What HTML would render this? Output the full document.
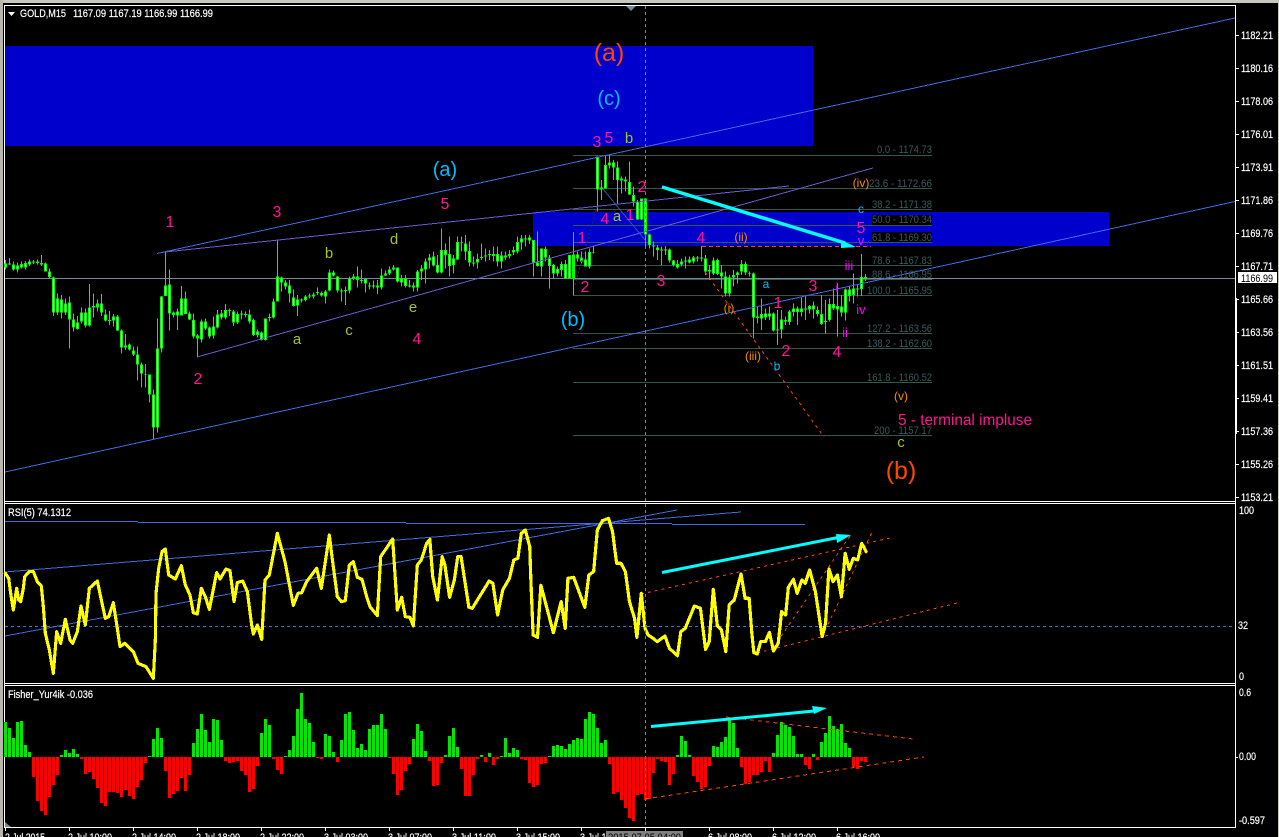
<!DOCTYPE html>
<html><head><meta charset="utf-8"><title>GOLD,M15</title>
<style>
html,body{margin:0;padding:0;background:#000;width:1279px;height:837px;overflow:hidden}
svg{display:block;position:absolute;left:0;top:0}
text{font-family:"Liberation Sans",sans-serif}
.m{text-anchor:middle}
.ax{font-size:11px;fill:#fff;stroke:#fff;stroke-width:.2px}
.fb{font-size:11px;fill:#3a5a5a}
.pk{font-size:16px;fill:#FF1493;text-anchor:middle}
.yg{font-size:15px;fill:#A4C41F;text-anchor:middle}
.sk{font-size:12px;fill:#00BFFF;text-anchor:middle}
.og{font-size:12px;fill:#FF8C00;text-anchor:middle}
.mg{font-size:13px;fill:#FF00FF;text-anchor:middle}
.c{shape-rendering:crispEdges;fill:none}
</style></head><body>
<svg width="1279" height="837" viewBox="0 0 1279 837" xmlns="http://www.w3.org/2000/svg">
<rect width="1279" height="837" fill="#000"/>
<rect x="0" y="0" width="1279" height="3" fill="#c9c6bd"/>
<rect x="0" y="0" width="3" height="837" fill="#b8b5ac"/>
<rect x="1278" y="0" width="1" height="837" fill="#c9c6bd"/>
<g shape-rendering="crispEdges" fill="#fff">
<rect x="4" y="5" width="1232" height="1"/>
<rect x="4" y="5" width="1" height="823"/>
<rect x="1235" y="5" width="1" height="823"/>
<rect x="4" y="501" width="1232" height="1"/>
<rect x="4" y="503" width="1232" height="1"/>
<rect x="4" y="683" width="1232" height="1"/>
<rect x="4" y="685" width="1232" height="1"/>
<rect x="4" y="827" width="1232" height="1"/>
<rect x="1235" y="298" width="2" height="136"/>
</g>
<!-- blue zones -->
<g shape-rendering="crispEdges" fill="#0000CD">
<rect x="5" y="46" width="808" height="100"/>
<rect x="533" y="212" width="576" height="34"/>
</g>
<!-- fib lines -->
<path class="c" stroke="#35554f" d="M573 155.5H932M573 188.5H932M573 209.5H932M573 225.5H932M573 242.5H932M573 265.5H932M573 279.5H932M573 295.5H932M573 333.5H932M573 348.5H932M573 382.5H932M573 435.5H932"/>
<!-- price line -->
<path class="c" stroke="#778899" d="M5 278.5H1235"/>
<!-- candles left -->
<g class="c" transform="translate(0 230) scale(.33333)">
<path stroke="#00FF00" stroke-width="3" d="M16 90V118M28 84V105M40 95V122M52 97V128M64 95V115M76 93V118M88 88V108M100 90V102M112 88V104M124 75V108M136 97V125M148 115V145M160 140V258M172 190V255M184 195V265M196 205V255M208 200V356M220 250V305M232 258V298M244 232V280M256 235V292M268 162V290M280 190V263M292 208V245M304 192V258M316 238V275M328 243V285M340 252V290M352 255V303M364 298V370M376 312V360M388 340V362M400 350V378M412 350V452M424 398V472M436 402V472M448 433V518M460 478V628M472 265V608M484 198V368M496 65V198M508 118V302M520 245V262M532 235V300M544 168V255M556 185V252M568 245V270M580 250V325M592 312V382M604 268V338M616 265V300M628 290V325M640 260V325M652 240V295M664 240V268M676 222V268M688 235V258M700 240V288M712 245V282M724 242V268M736 245V262M748 238V280M760 265V318M772 298V322M784 305V332M796 265V332M808 250V275M820 205V265M832 28V215M844 140V185M856 150V178M868 150V218M880 178V230M892 195V258M904 205V218M916 195V215M928 190V205M940 188V205M952 172V195M964 185V200M976 180V220M988 118V185M1000 122V140M1012 138V188M1024 175V215M1036 170V225M1048 140V190M1060 132V150M1072 110V172M1084 118V160M1096 145V188M1108 158V178M1120 152V175M1132 150V192M1144 115V178M1156 122V138M1168 110V135M1180 105V122M1192 112V158M1204 135V170M1216 135V172M1228 150V172M1240 158V185M1252 120V185M1264 105V150M1276 85V160M1288 72V115"/>
<path stroke="#00FF00" stroke-width="9" d="M16 100V113M28 100V103M40 103V118M52 106V118M64 102V112M76 99V112M88 94V103M100 94V98M112 94V99M124 99V104M136 100V124M148 124V141M160 142V248M172 205V248M184 208V248M196 220V248M208 217V268M220 268V292M232 277V297M244 247V275M256 247V287M268 232V287M280 228V232M292 220V232M304 220V248M316 253V271M328 270V273M340 260V271M352 259V301M364 301V352M376 346V353M388 344V358M400 361V373M412 374V403M424 403V430M436 432V434M448 434V493M460 493V592M472 355V592M484 199V355M496 166V198M508 163V250M520 247V255M532 245V256M544 205V256M556 205V252M568 250V268M580 270V320M592 316V325M604 275V328M616 275V296M628 292V320M640 290V316M652 253V292M664 250V262M676 240V262M688 240V243M700 245V278M712 252V278M724 251V254M736 252V255M748 253V275M760 270V315M772 304V315M784 308V330M796 265V330M808 261V264M820 214V263M832 140V214M844 143V157M856 157V170M868 167V190M880 203V228M892 208V226M904 208V212M916 199V210M928 197V200M940 193V199M952 186V189M964 189V197M976 184V199M988 127V182M1000 127V136M1012 140V182M1024 182V185M1036 180V183M1048 145V182M1060 139V145M1072 140V150M1084 150V153M1096 147V160M1108 167V170M1120 167V170M1132 167V172M1144 136V172M1156 130V136M1168 118V130M1180 112V118M1192 112V155M1204 146V158M1216 146V168M1228 166V170M1240 166V172M1252 124V172M1264 115V124M1276 94V118M1288 82V92"/>
<path stroke="#fff" stroke-width="3" d="M16 103V110M40 106V115M52 109V115M64 105V109M76 102V109M88 97V100M136 103V121M148 127V138M160 145V245M172 208V245M184 211V245M196 223V245M208 220V265M220 271V289M232 280V294M244 250V272M256 250V284M268 235V284M304 223V245M316 256V268M340 263V268M352 262V298M364 304V349M388 347V355M400 364V370M412 377V400M424 406V427M448 437V490M460 496V589M472 358V589M484 202V352M496 169V195M508 166V247M532 248V253M544 208V253M556 208V249M568 253V265M580 273V317M604 278V325M616 278V293M628 295V317M640 293V313M652 256V289M664 253V259M676 243V259M700 248V275M712 255V275M748 256V272M760 273V312M772 307V312M784 311V327M796 268V327M820 217V260M832 143V211M844 146V154M856 160V167M868 170V187M880 206V225M892 211V223M916 202V207M964 192V194M976 187V196M988 130V179M1000 130V133M1012 143V179M1048 148V179M1096 150V157M1144 139V169M1168 121V127M1192 115V152M1204 149V155M1216 149V165M1252 127V169M1264 118V121M1276 97V115M1288 85V89"/>
</g>
<!-- candles right -->
<g class="c" transform="translate(430 120) scale(.33333)">
<path stroke="#00FF00" stroke-width="3" d="M10 395V440M22 405V460M34 325V460M46 370V445M58 350V470M70 405V460M82 350V420M94 350V395M106 345V420M118 365V440M130 410V440M142 400V445M154 370V420M166 385V425M178 390V420M190 380V425M202 380V440M214 395V445M226 395V420M238 390V415M250 380V405M262 350V400M274 345V390M286 345V380M298 345V372M310 360V470M322 335V440M334 385V470M346 380V425M358 405V505M370 432V475M382 440V470M394 425V470M406 420V475M418 405V475M430 336V527M442 395V425M454 395V430M466 395V440M478 385V445M490 380V400M502 110V275M514 180V240M526 105V205M538 105V145M550 120V180M562 125V250M574 170V220M586 170V215M598 125V225M610 200V260M622 240V300M634 235V300M646 235V385M658 340V385M670 365V410M682 375V420M694 380V435M706 378V405M718 385V428M730 420V440M742 420V445M754 415V440M766 410V445M778 410V430M790 408V430M802 408V425M814 378V425M826 405V465M838 435V480M850 412V465M862 415V465M874 435V505M886 455V530M898 465V530M910 450V500M922 455V490M934 420V465M946 425V465M958 455V470M970 458V655M982 560V610M994 535V630M1006 565V600M1018 560V600M1030 578V635M1042 570V675M1054 570V655M1066 590V615M1078 570V615M1090 550V590M1102 560V615M1114 530V590M1126 530V600M1138 555V580M1150 545V595M1162 560V590M1174 525V615M1186 540V640M1198 535V605M1210 505V570M1222 490V650M1234 525V590M1246 505V602M1258 500V545M1270 460V550M1282 495V530M1294 402V528M1306 462V483"/>
<path stroke="#00FF00" stroke-width="9" d="M10 410V437M22 435V458M34 390V458M46 390V405M58 402V438M70 415V435M82 366V418M94 366V368M106 370V395M118 393V428M130 428V431M142 417V428M154 411V414M166 406V409M178 402V405M190 402V408M202 402V425M214 406V425M226 406V412M238 402V408M250 390V397M262 366V395M274 355V368M286 355V358M298 352V362M310 360V428M322 428V438M334 385V440M346 387V412M358 412V438M370 435V460M382 447V460M394 432V450M406 432V475M418 405V475M430 403V475M442 403V416M454 412V424M466 418V440M478 396V440M490 396V398M502 110V208M514 202V208M526 135V205M538 127V137M550 127V142M562 142V180M574 176V182M586 178V184M598 186V224M610 225V244M622 244V298M634 236V298M646 235V344M658 344V375M670 376V380M682 382V390M694 388V391M706 388V391M718 388V422M730 422V435M742 432V442M754 425V433M766 422V425M778 418V427M790 412V425M802 412V415M814 412V415M826 415V455M838 450V455M850 422V460M862 420V462M874 458V470M886 470V520M898 472V520M910 465V472M922 458V465M934 432V455M946 432V458M958 460V462M970 460V592M982 590V594M994 582V596M1006 580V592M1018 580V590M1030 580V632M1042 628V632M1054 598V628M1066 600V604M1078 574V606M1090 565V576M1102 566V576M1114 565V576M1126 565V568M1138 558V568M1150 556V568M1162 570V582M1174 582V612M1186 603V606M1198 552V600M1210 552V566M1222 558V568M1234 560V578M1246 508V578M1258 508V528M1270 505V525M1282 505V508M1294 471V507M1306 471V477"/>
<path stroke="#fff" stroke-width="3" d="M10 413V434M22 438V455M34 393V455M46 393V402M58 405V435M70 418V432M82 369V415M106 373V392M118 396V425M142 420V425M202 405V422M214 409V422M250 393V394M262 369V392M274 358V365M298 355V359M310 363V425M322 431V435M334 388V437M346 390V409M358 415V435M370 438V457M382 450V457M394 435V447M406 435V472M418 408V472M442 406V413M454 415V421M466 421V437M478 399V437M502 113V205M526 138V202M538 130V134M550 130V139M562 145V177M598 189V221M610 228V241M622 247V295M634 239V295M646 238V341M658 347V372M682 385V387M718 391V419M730 425V432M742 435V439M754 428V430M778 421V424M790 415V422M826 418V452M850 425V457M862 423V459M874 461V467M886 473V517M898 475V517M922 461V462M934 435V452M946 435V455M970 463V589M994 585V593M1006 583V589M1018 583V587M1030 583V629M1054 601V625M1078 577V603M1090 568V573M1102 569V573M1114 568V573M1138 561V565M1150 559V565M1162 573V579M1174 585V609M1198 555V597M1210 555V563M1222 561V565M1234 563V575M1246 511V575M1258 511V525M1270 508V522M1294 474V504"/>
</g>
<!-- trend lines main -->
<g class="c">
<path stroke="#4169E1" d="M5 472L1235 201.5M157 253.5L1235 18"/>
<path stroke="#6A5ACD" d="M165 252L789 186M197 357L873 168"/>
<path stroke="#3a4fa0" d="M603 189L645 240"/>
<path stroke="#1c2a70" stroke-dasharray="2 2" d="M575 285L597 207"/>
<path stroke="#FF4500" stroke-dasharray="4 3" d="M702 246.5H871"/>
<path stroke="#FF4500" stroke-dasharray="3 4" d="M705 272L824 437"/>
</g>
<!-- arrows -->
<path d="M662 187L845 243" stroke="#00FFFF" stroke-width="3.5" fill="none"/>
<polygon points="841,240 856,247 841,248" fill="#00FFFF"/>
<!-- RSI -->
<g class="c">
<path stroke="#4169E1" d="M5 521.5H138M138 522.5H406M406 523.5H672M672 524.5H805M5 572L741 512M5 636L677 510"/>
<path stroke="#3a6ff0" stroke-dasharray="3 3" d="M5 626.5H1235"/>
<path stroke="#FF4500" stroke-dasharray="3 4" d="M641 594L890 538M757 653L957 603M773 648L852 533M822 637L873 530"/>
</g>
<g fill="none" stroke="#FFFF00" stroke-linejoin="round" stroke-linecap="round" shape-rendering="crispEdges">
<polyline transform="translate(0 500) scale(.33333)" stroke-width="9.5" points="16,220 26,235 32,280 40,330 50,265 56,300 62,305 70,265 74,230 88,215 100,215 112,245 124,258 130,320 136,400 148,450 160,520 170,395 182,430 196,358 210,420 218,430 232,395 243,318 256,375 268,265 292,243 304,300 316,355 326,350 340,308 352,385 360,440 374,430 400,455 414,490 438,500 460,535 466,420 468,280 476,205 486,155 496,147 506,225 526,237 544,197 556,255 570,285 580,338 592,342 604,265 616,290 628,328 650,218 660,237 678,207 690,212 702,305 712,248 728,243 742,275 755,375 760,402 772,375 785,418 795,240 808,225 832,100 855,185 880,316 894,280 905,278 920,245 950,205 964,265 988,105 996,170 1012,290 1024,305 1036,302 1048,195 1060,185 1072,232 1086,238 1100,290 1110,320 1132,347 1142,170 1178,117 1192,330 1205,292 1216,350 1230,352 1240,378 1252,195 1264,180 1280,130 1290,118"/>
<polyline transform="translate(430 500) scale(.33807 .33333)" stroke-width="9.5" points="0,125 8,230 22,300 36,170 44,195 58,292 72,240 82,170 92,170 115,322 125,325 175,243 186,250 200,345 215,270 235,235 248,180 260,175 270,100 282,90 295,140 298,230 305,405 318,412 328,256 365,398 388,305 400,385 408,235 425,232 458,322 470,225 484,215 495,90 510,62 528,55 540,95 552,190 565,190 578,215 590,305 605,355 612,412 625,280 636,385 645,405 660,415 672,425 695,408 708,445 732,467 742,395 755,385 782,318 800,325 815,448 826,425 838,268 850,378 862,390 875,455 885,315 900,300 920,222 932,295 944,295 952,400 958,458 968,462 978,425 992,425 1004,397 1016,453 1030,430 1040,335 1052,345 1060,262 1075,238 1086,280 1100,240 1110,250 1123,210 1140,275 1160,410 1170,370 1180,207 1192,245 1205,225 1217,290 1228,160 1240,208 1252,175 1265,180 1277,130 1290,155"/>
</g>
<path d="M662 572.5L838 537.5" stroke="#00FFFF" stroke-width="3" fill="none"/>
<polygon points="836,534 851,535 837,543" fill="#00FFFF"/>
<!-- Fisher left -->
<g class="c" stroke-width="9" transform="translate(0 680) scale(.33333)">
<path stroke="#00E800" d="M16 231V126M28 231V144M40 231V174M52 231V126M64 231V123M76 231V195M88 231V216M184 231V225M196 231V210M208 231V219M220 231V207M232 231V222M448 231V228M460 231V177M472 231V144M484 231V174M580 231V189M592 231V147M604 231V102M616 231V150M628 231V186M640 231V117M652 231V120M664 231V180M784 231V159M796 231V117M808 231V135M856 231V228M868 231V210M880 231V168M892 231V87M904 231V39M916 231V117M928 231V129M940 231V186M976 231V162M988 231V168M1000 231V216M1024 231V180M1036 231V102M1048 231V96M1060 231V150M1072 231V204M1084 231V192M1096 231V210M1108 231V147M1120 231V135M1132 231V135M1144 231V102M1156 231V147M1240 231V177M1252 231V132M1264 231V153M1276 231V213"/>
<path stroke="#FF0000" d="M100 231V291M112 231V363M124 231V393M136 231V405M148 231V351M160 231V315M172 231V285M244 231V237M256 231V282M268 231V276M280 231V297M292 231V324M304 231V369M316 231V378M328 231V336M340 231V336M352 231V339M364 231V351M376 231V330M388 231V348M400 231V357M412 231V321M424 231V300M436 231V249M496 231V273M508 231V354M520 231V342M532 231V333M544 231V294M556 231V333M568 231V285M676 231V243M688 231V249M700 231V246M712 231V243M724 231V273M736 231V285M748 231V336M760 231V327M772 231V258M820 231V237M832 231V270M844 231V282M952 231V234M964 231V237M1012 231V246M1168 231V234M1180 231V282M1192 231V345M1204 231V330M1216 231V273M1228 231V252M1288 231V243"/>
</g>
<!-- Fisher right -->
<g class="c" stroke-width="9" transform="translate(429.67 680) scale(.33333)">
<path stroke="#00E800" d="M48 231V225M60 231V168M72 231V144M84 231V201M156 231V225M180 231V219M216 231V228M228 231V174M240 231V219M252 231V204M264 231V210M360 231V228M372 231V198M384 231V195M396 231V198M408 231V207M420 231V192M432 231V180M444 231V174M456 231V177M468 231V117M480 231V96M492 231V102M504 231V144M516 231V189M528 231V180M744 231V225M756 231V168M768 231V183M780 231V225M852 231V198M864 231V201M876 231V186M888 231V171M900 231V120M912 231V129M924 231V204M1032 231V219M1044 231V165M1056 231V126M1068 231V135M1080 231V141M1092 231V168M1104 231V222M1116 231V222M1152 231V222M1176 231V186M1188 231V159M1200 231V108M1212 231V138M1224 231V147M1236 231V132M1248 231V189M1260 231V204"/>
<path stroke="#FF0000" d="M12 231V318M24 231V315M36 231V249M96 231V267M108 231V348M120 231V348M132 231V285M144 231V237M168 231V246M192 231V255M204 231V237M276 231V237M288 231V240M300 231V309M312 231V321M324 231V315M336 231V252M348 231V249M540 231V252M552 231V342M564 231V336M576 231V360M588 231V384M600 231V414M612 231V423M624 231V345M636 231V342M648 231V360M660 231V357M672 231V279M684 231V237M696 231V243M708 231V246M720 231V315M732 231V282M792 231V288M804 231V306M816 231V327M828 231V321M840 231V258M936 231V261M948 231V312M960 231V306M972 231V285M984 231V285M996 231V276M1008 231V243M1020 231V276M1128 231V255M1140 231V267M1164 231V240M1272 231V261M1284 231V267M1296 231V243M1308 231V246"/>
</g>
<path class="c" stroke="#FF4500" stroke-dasharray="4 4" d="M645 799L924 757M726 717L913 739"/>
<path d="M651 726.5L814 711" stroke="#00FFFF" stroke-width="3" fill="none"/>
<polygon points="812,706 827,708 814,714" fill="#00FFFF"/>
<!-- crosshair -->
<path class="c" stroke="#808080" stroke-dasharray="3 3" d="M645.5 6V827"/>
<polygon points="626,6 636,6 631,11" fill="#778899"/>
<polygon points="5,822 11,827 5,827" fill="#778899"/>
<!-- ticks -->
<path class="c" stroke="#fff" d="M1236 35.5h3M1236 68.5h3M1236 101.5h3M1236 134.5h3M1236 167.5h3M1236 200.5h3M1236 233.5h3M1236 266.5h3M1236 299.5h3M1236 332.5h3M1236 365.5h3M1236 398.5h3M1236 431.5h3M1236 464.5h3M1236 497.5h3M1236 757.5h2M5.5 828v3M69.5 828v3M133.5 828v3M197.5 828v3M261.5 828v3M325.5 828v3M389.5 828v3M453.5 828v3M517.5 828v3M581.5 828v3M645.5 828v3M709.5 828v3M773.5 828v3M837.5 828v3"/>
<!-- labels -->
<polygon points="8,12 15,12 11.5,16" fill="#fff"/>
<g class="ax">
<text x="20" y="17" textLength="46" lengthAdjust="spacingAndGlyphs">GOLD,M15</text>
<text x="73" y="17" textLength="140" lengthAdjust="spacingAndGlyphs">1167.09 1167.19 1166.99 1166.99</text>
<text x="8" y="516" textLength="63" lengthAdjust="spacingAndGlyphs">RSI(5) 74.1312</text>
<text x="8" y="698" textLength="85" lengthAdjust="spacingAndGlyphs">Fisher_Yur4ik -0.036</text>
<text x="1241" y="39" textLength="32" lengthAdjust="spacingAndGlyphs">1182.21</text>
<text x="1241" y="72" textLength="32" lengthAdjust="spacingAndGlyphs">1180.16</text>
<text x="1241" y="105" textLength="32" lengthAdjust="spacingAndGlyphs">1178.06</text>
<text x="1241" y="138" textLength="32" lengthAdjust="spacingAndGlyphs">1176.01</text>
<text x="1241" y="171" textLength="32" lengthAdjust="spacingAndGlyphs">1173.91</text>
<text x="1241" y="204" textLength="32" lengthAdjust="spacingAndGlyphs">1171.86</text>
<text x="1241" y="237" textLength="32" lengthAdjust="spacingAndGlyphs">1169.76</text>
<text x="1241" y="270" textLength="32" lengthAdjust="spacingAndGlyphs">1167.71</text>
<text x="1241" y="303" textLength="32" lengthAdjust="spacingAndGlyphs">1165.66</text>
<text x="1241" y="336" textLength="32" lengthAdjust="spacingAndGlyphs">1163.56</text>
<text x="1241" y="369" textLength="32" lengthAdjust="spacingAndGlyphs">1161.51</text>
<text x="1241" y="402" textLength="32" lengthAdjust="spacingAndGlyphs">1159.41</text>
<text x="1241" y="435" textLength="32" lengthAdjust="spacingAndGlyphs">1157.36</text>
<text x="1241" y="468" textLength="32" lengthAdjust="spacingAndGlyphs">1155.26</text>
<text x="1241" y="501" textLength="32" lengthAdjust="spacingAndGlyphs">1153.21</text>
<text x="1239" y="514" textLength="15" lengthAdjust="spacingAndGlyphs">100</text>
<text x="1238" y="629" textLength="10" lengthAdjust="spacingAndGlyphs">32</text>
<text x="1239" y="680" textLength="5" lengthAdjust="spacingAndGlyphs">0</text>
<text x="1239" y="696" textLength="12" lengthAdjust="spacingAndGlyphs">0.6</text>
<text x="1239" y="760" textLength="17" lengthAdjust="spacingAndGlyphs">0.00</text>
<text x="1239" y="824" textLength="26" lengthAdjust="spacingAndGlyphs">-0.597</text>
</g>
<rect x="1238" y="272" width="39" height="11" fill="#fff"/>
<text x="1241" y="282" font-size="11" fill="#000" textLength="32" lengthAdjust="spacingAndGlyphs">1166.99</text>
<!-- bottom axis -->
<g class="ax">
<text x="5" y="841" textLength="40" lengthAdjust="spacingAndGlyphs">2 Jul 2015</text>
<text x="68" y="841" textLength="44" lengthAdjust="spacingAndGlyphs">2 Jul 10:00</text>
<text x="132" y="841" textLength="44" lengthAdjust="spacingAndGlyphs">2 Jul 14:00</text>
<text x="196" y="841" textLength="44" lengthAdjust="spacingAndGlyphs">2 Jul 18:00</text>
<text x="260" y="841" textLength="44" lengthAdjust="spacingAndGlyphs">2 Jul 22:00</text>
<text x="324" y="841" textLength="44" lengthAdjust="spacingAndGlyphs">3 Jul 03:00</text>
<text x="388" y="841" textLength="44" lengthAdjust="spacingAndGlyphs">3 Jul 07:00</text>
<text x="452" y="841" textLength="44" lengthAdjust="spacingAndGlyphs">3 Jul 11:00</text>
<text x="516" y="841" textLength="44" lengthAdjust="spacingAndGlyphs">3 Jul 15:00</text>
<text x="580" y="841" textLength="44" lengthAdjust="spacingAndGlyphs">3 Jul 19:00</text>
<text x="708" y="841" textLength="44" lengthAdjust="spacingAndGlyphs">6 Jul 08:00</text>
<text x="772" y="841" textLength="44" lengthAdjust="spacingAndGlyphs">6 Jul 12:00</text>
<text x="836" y="841" textLength="44" lengthAdjust="spacingAndGlyphs">6 Jul 16:00</text>
</g>
<rect x="606" y="831" width="77" height="6" fill="#808080"/>
<text x="608" y="841" font-size="11" fill="#000" textLength="73" lengthAdjust="spacingAndGlyphs">2015.07.05 04:00</text>
<!-- fib labels -->
<g shape-rendering="crispEdges" fill="#000"><rect x="872" y="215" width="60" height="10"/><rect x="872" y="232" width="60" height="10"/></g>
<g class="fb">
<text x="877" y="153" textLength="55" lengthAdjust="spacingAndGlyphs">0.0 - 1174.73</text>
<text x="869" y="187" textLength="63" lengthAdjust="spacingAndGlyphs">23.6 - 1172.66</text>
<text x="872" y="208" textLength="60" lengthAdjust="spacingAndGlyphs">38.2 - 1171.38</text>
<text x="872" y="223" textLength="60" lengthAdjust="spacingAndGlyphs">50.0 - 1170.34</text>
<text x="872" y="241" textLength="60" lengthAdjust="spacingAndGlyphs">61.8 - 1169.30</text>
<text x="872" y="264" textLength="60" lengthAdjust="spacingAndGlyphs">78.6 - 1167.83</text>
<text x="872" y="278" textLength="60" lengthAdjust="spacingAndGlyphs">88.6 - 1166.95</text>
<text x="867" y="294" textLength="65" lengthAdjust="spacingAndGlyphs">100.0 - 1165.95</text>
<text x="867" y="332" textLength="65" lengthAdjust="spacingAndGlyphs">127.2 - 1163.56</text>
<text x="867" y="347" textLength="65" lengthAdjust="spacingAndGlyphs">138.2 - 1162.60</text>
<text x="867" y="381" textLength="65" lengthAdjust="spacingAndGlyphs">161.8 - 1160.52</text>
<text x="874" y="434" textLength="58" lengthAdjust="spacingAndGlyphs">200 - 1157.17</text>
</g>
<!-- wave labels -->
<g font-size="25" fill="#FF4500" text-anchor="middle">
<text x="609" y="61">(a)</text>
<text x="901" y="479">(b)</text>
</g>
<g font-size="20" fill="#00BFFF" text-anchor="middle">
<text x="609" y="105">(c)</text>
<text x="445" y="176">(a)</text>
<text x="573" y="326">(b)</text>
</g>
<g>
<text class="pk" x="170" y="227">1</text>
<text class="pk" x="277" y="217">3</text>
<text class="pk" x="198" y="384">2</text>
<text class="pk" x="445" y="209">5</text>
<text class="pk" x="417" y="344">4</text>
<text class="pk" x="597" y="147">3</text>
<text class="pk" x="609" y="143">5</text>
<text class="pk" x="605" y="224">4</text>
<text class="pk" x="630" y="220">1</text>
<text class="pk" x="642" y="192">2</text>
<text class="pk" x="582" y="243">1</text>
<text class="pk" x="585" y="292">2</text>
<text class="pk" x="661" y="286">3</text>
<text class="pk" x="701" y="243">4</text>
<text class="pk" x="813" y="291">3</text>
<text class="pk" x="778" y="308">1</text>
<text class="pk" x="786" y="356">2</text>
<text class="pk" x="837" y="357">4</text>
<text class="pk" x="861" y="233">5</text>
<text x="898" y="425" font-size="16" fill="#FF1493" textLength="134" lengthAdjust="spacingAndGlyphs">5 - terminal impluse</text>
<text class="yg" x="629" y="143">b</text>
<text class="yg" x="617" y="221">a</text>
<text class="yg" x="329" y="258">b</text>
<text class="yg" x="394" y="244">d</text>
<text class="yg" x="297" y="344">a</text>
<text class="yg" x="349" y="335">c</text>
<text class="yg" x="413" y="312">e</text>
<text class="yg" x="901" y="447">c</text>
<text class="sk" x="766" y="288">a</text>
<text class="sk" x="777" y="370">b</text>
<text class="sk" x="861" y="213">c</text>
<text class="og" x="729" y="312">(i)</text>
<text class="og" x="741" y="241">(ii)</text>
<text class="og" x="753" y="360">(iii)</text>
<text class="og" x="861" y="187">(iv)</text>
<text class="og" x="901" y="400">(v)</text>
<text class="mg" x="849" y="270">iii</text>
<text class="mg" x="837" y="292">i</text>
<text class="mg" x="845" y="337">ii</text>
<text class="mg" x="861" y="314">iv</text>
<text class="mg" x="861" y="245">v</text>
</g>
</svg>
</body></html>
